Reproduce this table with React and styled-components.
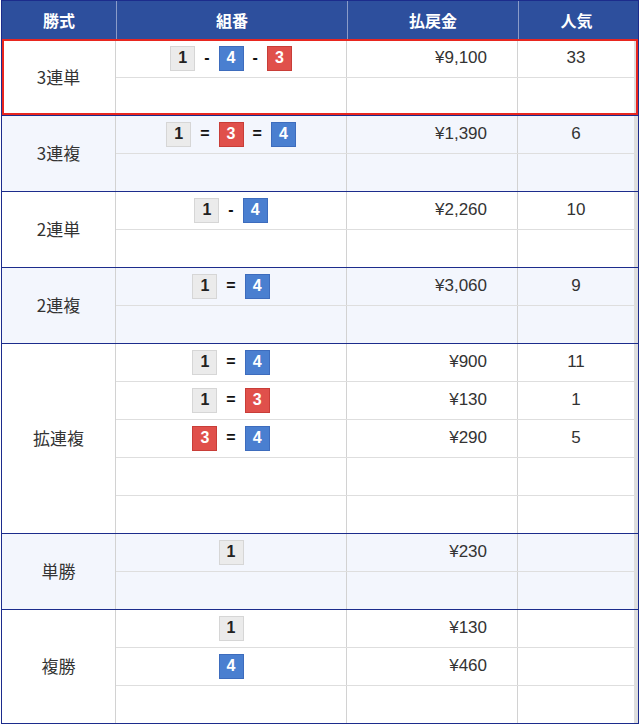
// Base imports
import React from 'react';

// Style imports
import styled, { createGlobalStyle } from 'styled-components';

const colors = {
  navy: '#1c2c8c',
  head: '#2d4f9d',
  headLine: '#8a9cc9',
  line: '#d2d2d2',
  subLine: '#dedede',
  alt: '#f3f6fd',
  text: '#333',
  red: '#e8261f',
};

const GlobalStyle = createGlobalStyle`
  html, body {
    margin: 0;
    padding: 0;
    background: #fff;
  }
  body {
    font-family: "Liberation Sans", "Noto Sans CJK JP", sans-serif;
    color: ${colors.text};
  }
`;

const cols = '114px 231px 171px 116px';

// Styled components
const Table = styled.div`
  width: 636px;
  margin-left: 1px;
  border: 1px solid ${colors.navy};
`;

const Head = styled.div`
  display: grid;
  grid-template-columns: ${cols};
  height: 38px;
  background: ${colors.head};
`;

const HeadCell = styled.div`
  display: flex;
  align-items: center;
  justify-content: center;
  color: #fff;
  font-family: "Noto Sans CJK JP", sans-serif;
  font-weight: 700;
  font-size: 16px;
  border-left: ${p => (p.$first ? 'none' : `1px solid ${colors.headLine}`)};
`;

const Group = styled.div`
  display: grid;
  grid-template-columns: ${cols};
  grid-auto-rows: 37px;
  row-gap: 1px;
  border-top: 1px solid ${colors.navy};
  background-color: ${p => (p.$alt ? colors.alt : '#fff')};
  background-image: linear-gradient(${colors.subLine}, ${colors.subLine});
  outline: ${p => (p.$hot ? `2px solid ${colors.red}` : 'none')};
  outline-offset: -2px;
  position: relative;
`;

const Label = styled.div`
  grid-row: 1 / span ${p => p.$rows};
  grid-column: 1;
  display: flex;
  align-items: center;
  justify-content: center;
  padding-bottom: 2px;
  font-size: 17px;
  font-family: "Noto Sans CJK JP", sans-serif;
  border-right: 1px solid ${colors.line};
  background: ${p => (p.$alt ? colors.alt : '#fff')};
`;

const Cell = styled.div`
  display: flex;
  align-items: center;
  justify-content: ${p => p.$align || 'center'};
  padding-right: ${p => (p.$align === 'flex-end' ? '30px' : '0')};
  padding-bottom: 1px;
  font-size: 17px;
  border-right: ${p => (p.$last ? 'none' : `1px solid ${colors.line}`)};
  background: ${p => (p.$alt ? colors.alt : '#fff')};
`;

const Combo = styled.div`
  display: flex;
  align-items: center;
  gap: 9px;
`;

const boxStyles = {
  g: { bg: '#ebebeb', bd: '#d6d6d6', fg: '#222' },
  b: { bg: '#4a7fd0', bd: '#3d6cbd', fg: '#fff' },
  r: { bg: '#e0504b', bd: '#c83d38', fg: '#fff' },
};

const Num = styled.span`
  box-sizing: border-box;
  width: 25px;
  height: 25px;
  display: flex;
  align-items: center;
  justify-content: center;
  font-weight: 700;
  font-size: 16px;
  background: ${p => boxStyles[p.$c].bg};
  border: 1px solid ${p => boxStyles[p.$c].bd};
  color: ${p => boxStyles[p.$c].fg};
`;

const Sep = styled.span`
  font-weight: 700;
  font-size: 16px;
  color: #111;
`;

const boxColor = n => (n === '4' ? 'b' : n === '3' ? 'r' : 'g');

const groups = [
  { label: '3連単', hot: true, rows: [{ combo: ['1', '-', '4', '-', '3'], pay: '¥9,100', pop: '33' }, {}] },
  { label: '3連複', rows: [{ combo: ['1', '=', '3', '=', '4'], pay: '¥1,390', pop: '6' }, {}] },
  { label: '2連単', rows: [{ combo: ['1', '-', '4'], pay: '¥2,260', pop: '10' }, {}] },
  { label: '2連複', rows: [{ combo: ['1', '=', '4'], pay: '¥3,060', pop: '9' }, {}] },
  {
    label: '拡連複',
    rows: [
      { combo: ['1', '=', '4'], pay: '¥900', pop: '11' },
      { combo: ['1', '=', '3'], pay: '¥130', pop: '1' },
      { combo: ['3', '=', '4'], pay: '¥290', pop: '5' },
      {},
      {},
    ],
  },
  { label: '単勝', rows: [{ combo: ['1'], pay: '¥230', pop: '' }, {}] },
  { label: '複勝', rows: [{ combo: ['1'], pay: '¥130', pop: '' }, { combo: ['4'], pay: '¥460', pop: '' }, {}] },
];

/**
 * Race payout table
 */
const App = () => (
  <>
    <GlobalStyle />
    <Table>
      <Head>
        <HeadCell $first>勝式</HeadCell>
        <HeadCell>組番</HeadCell>
        <HeadCell>払戻金</HeadCell>
        <HeadCell>人気</HeadCell>
      </Head>
      {groups.map((g, gi) => {
        const alt = gi % 2 === 1;
        return (
          <Group key={g.label} $alt={alt} $hot={g.hot}>
            <Label $rows={g.rows.length} $alt={alt}>{g.label}</Label>
            {g.rows.map((r, ri) => (
              <React.Fragment key={ri}>
                <Cell $alt={alt}>
                  {r.combo && (
                    <Combo>
                      {r.combo.map((c, ci) =>
                        c === '-' || c === '=' ? (
                          <Sep key={ci}>{c}</Sep>
                        ) : (
                          <Num key={ci} $c={boxColor(c)}>{c}</Num>
                        )
                      )}
                    </Combo>
                  )}
                </Cell>
                <Cell $alt={alt} $align="flex-end">{r.pay}</Cell>
                <Cell $alt={alt} $last>{r.pop}</Cell>
              </React.Fragment>
            ))}
          </Group>
        );
      })}
    </Table>
  </>
);

export default App;
